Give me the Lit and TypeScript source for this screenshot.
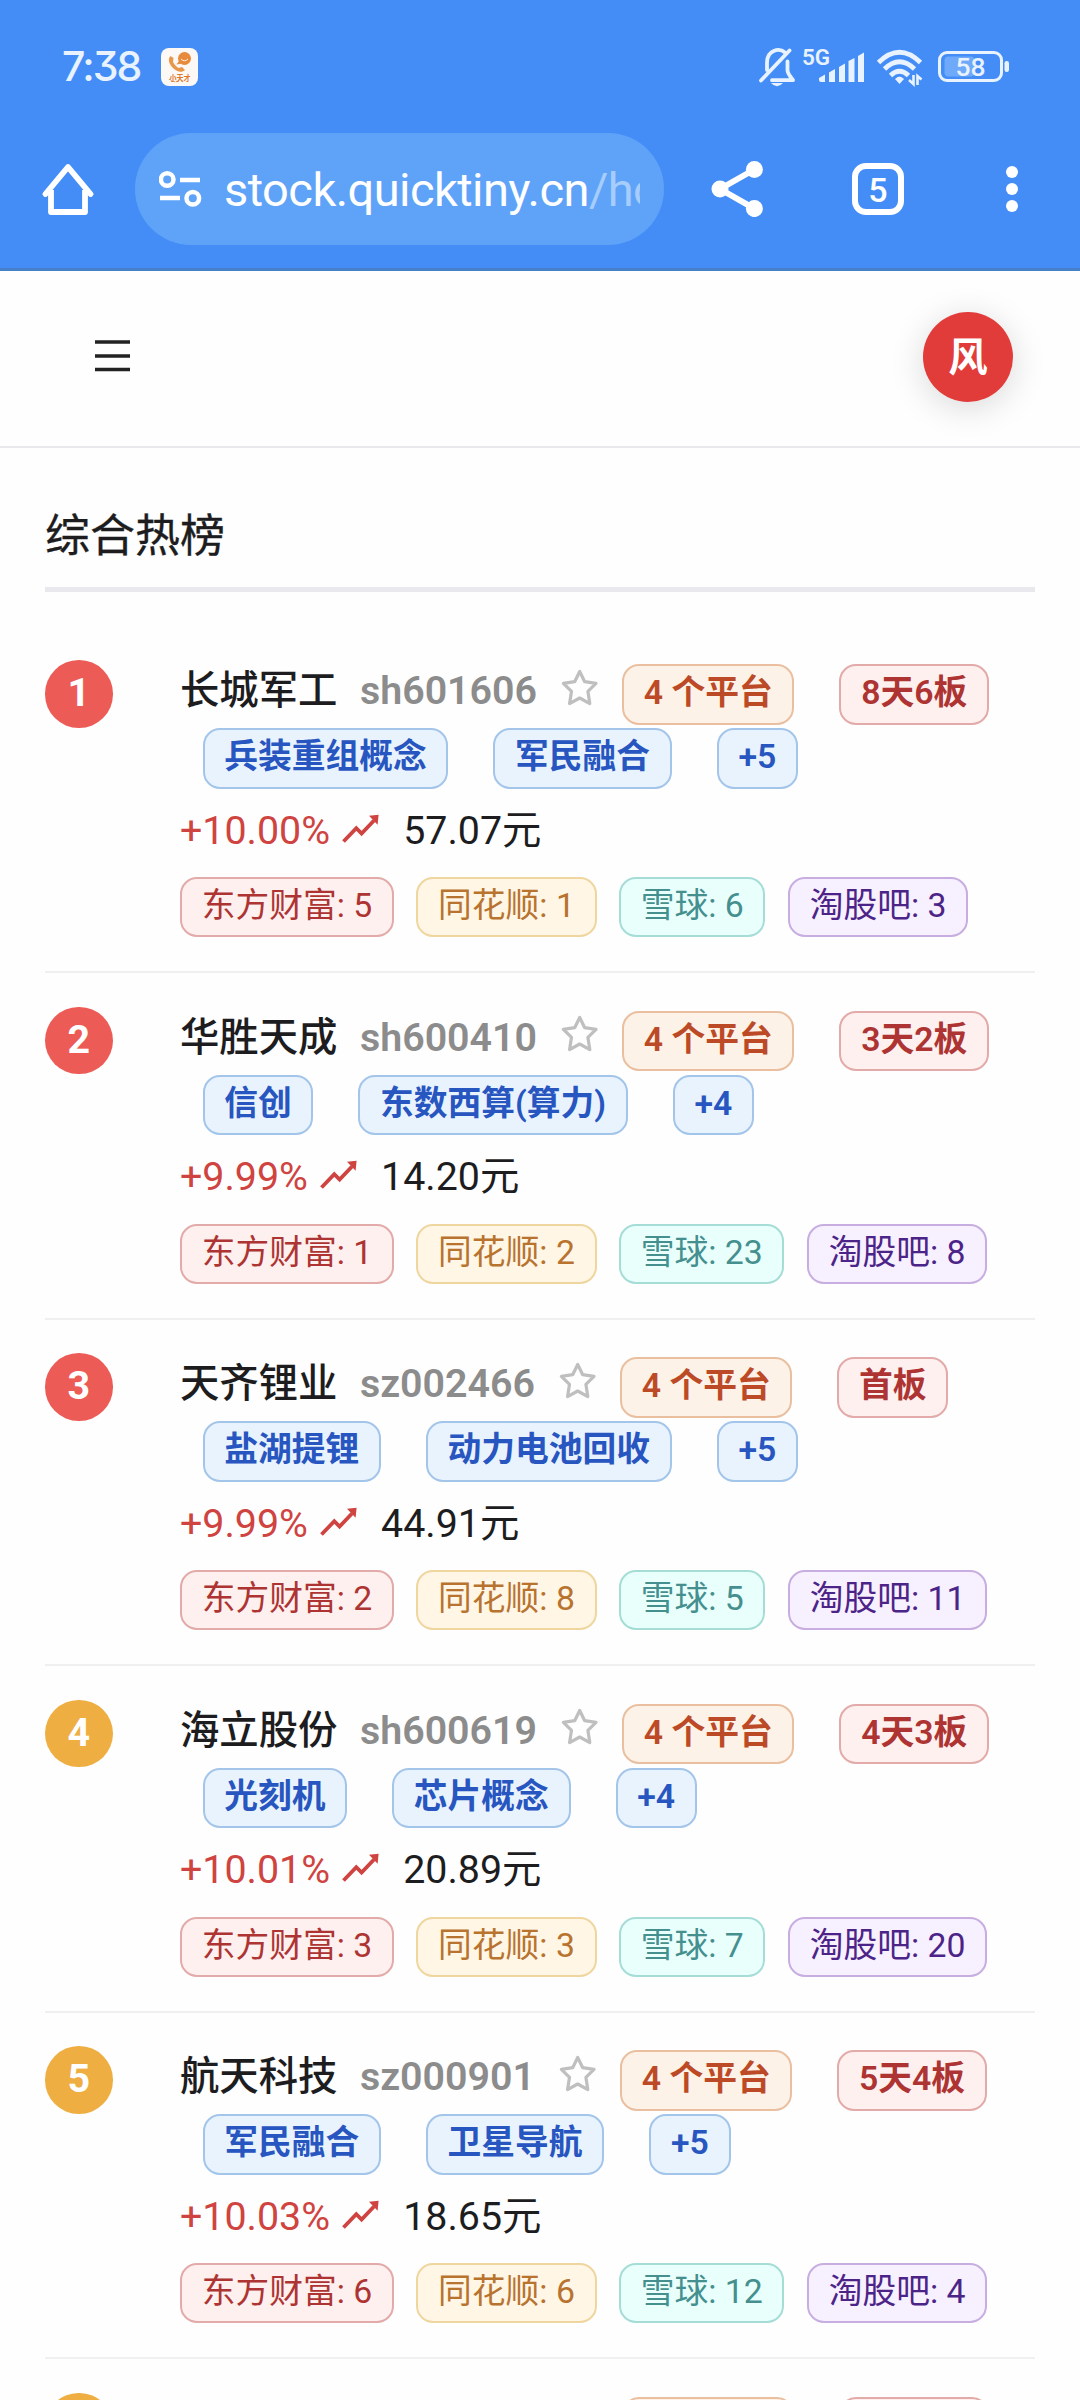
import { LitElement, html, css } from "lit";
import { customElement, property } from "lit/decorators.js";

interface Stock {
  rank: number;
  name: string;
  code: string;
  boards: string;
  concepts: string[];
  change: string;
  price: string;
  ranks: [number, number, number, number];
}

const STOCKS: Stock[] = [
  { rank: 1, name: "长城军工", code: "sh601606", boards: "8天6板", concepts: ["兵装重组概念", "军民融合", "+5"], change: "+10.00%", price: "57.07元", ranks: [5, 1, 6, 3] },
  { rank: 2, name: "华胜天成", code: "sh600410", boards: "3天2板", concepts: ["信创", "东数西算(算力)", "+4"], change: "+9.99%", price: "14.20元", ranks: [1, 2, 23, 8] },
  { rank: 3, name: "天齐锂业", code: "sz002466", boards: "首板", concepts: ["盐湖提锂", "动力电池回收", "+5"], change: "+9.99%", price: "44.91元", ranks: [2, 8, 5, 11] },
  { rank: 4, name: "海立股份", code: "sh600619", boards: "4天3板", concepts: ["光刻机", "芯片概念", "+4"], change: "+10.01%", price: "20.89元", ranks: [3, 3, 7, 20] },
  { rank: 5, name: "航天科技", code: "sz000901", boards: "5天4板", concepts: ["军民融合", "卫星导航", "+5"], change: "+10.03%", price: "18.65元", ranks: [6, 6, 12, 4] },
];

const PLATFORMS: [string, string][] = [
  ["东方财富", "red"],
  ["同花顺", "amber"],
  ["雪球", "teal"],
  ["淘股吧", "purple"],
];

const tagStyles = css`
  .tag {
    box-sizing: border-box;
    height: 60.25px;
    padding: 0 19.7px 3px;
    border: 2px solid;
    border-radius: 17px;
    font-size: 33.75px;
    line-height: 53.25px;
    white-space: nowrap;
    flex: none;
  }
  .strong { font-weight: 600; }
  .orange { color: #bc4a26; background: #fdf2e8; border-color: #e9bfa0; }
  .red { color: #ad3432; background: #fdf0ef; border-color: #e2aaa8; }
  .blue { color: #2856c0; background: #e8f3fe; border-color: #a3c5e9; }
  .amber { color: #b8732f; background: #fff6e6; border-color: #efd69f; }
  .teal { color: #458f8f; background: #e8fffc; border-color: #a5ddd6; }
  .purple { color: #4c2488; background: #f7f0ff; border-color: #c8aee0; }
  .rank {
    width: 67.5px;
    height: 67.5px;
    border-radius: 50%;
    background: #eeae42;
    color: #fff;
    font-size: 39.375px;
    font-weight: 700;
    line-height: 66px;
    text-align: center;
    flex: none;
  }
  .top { background: #ec5b56; }
`;

@customElement("status-bar")
export class StatusBar extends LitElement {
  static styles = css`
    :host {
      display: flex;
      align-items: center;
      box-sizing: border-box;
      height: 133px;
      padding: 0 70px 0 62px;
      color: #e8f3ff;
    }
    .time {
      width: 99px;
      padding-bottom: 1px;
      font: 500 41px/50px Inter, sans-serif;
      font-feature-settings: "cv09";
      letter-spacing: -1.9px;
    }
    .icons { margin-left: auto; }
    svg { display: block; }
    .small { font: 600 22.5px Roboto, sans-serif; }
    .level { font: 500 26.5px Roboto, sans-serif; }
    .brand { font: 700 8px "Noto Sans CJK SC", sans-serif; }
  `;

  render() {
    return html`
      <span class="time">7:38</span>
      <svg width="37" height="38" viewBox="0 0 37 38">
        <rect width="37" height="38" rx="8" fill="#fbf8f5" />
        <path d="M9.500 8C6.500 11 8 16 12 20C16 24 21 25 24 22L21 19L17.500 20C14.500 18 13 16 12 14L12.500 10Z" fill="#e7964a" />
        <circle cx="23.500" cy="10.500" r="6.500" fill="#e78a3c" />
        <path d="M18 13L15.500 16.500L21 15.500Z" fill="#e78a3c" />
        <path d="M20 11Q23.500 14.500 27 11" stroke="#fbf0e4" fill="none" />
        <path d="M8 31Q12 35 18 33" stroke="#e0782c" stroke-dasharray="1.500 1" fill="none" />
        <text class="brand" x="8.500" y="33" textLength="21" lengthAdjust="spacingAndGlyphs" fill="#dd7a2c">小天才</text>
      </svg>
      <svg class="icons" width="254" height="46" viewBox="756 43 254 46">
        <g fill="none" stroke="#e8f3ff" stroke-width="3.800" stroke-linejoin="round" stroke-linecap="round">
          <path d="M761 79.500L789.500 49.500" />
          <path d="M767 69V61.500C767 49 779 46.500 785 51.500" />
          <path d="M772 79.200H793C789.500 74.500 787.500 72.500 787.500 69V60.500" />
        </g>
        <path d="M771 82H783Q777 88.500 771 82Z" fill="#e8f3ff" />
        <text class="small" x="802" y="63.500" fill="#e8f3ff">5G</text>
        <g fill="#e8f3ff">
          <path d="M819 77L825 73.500V81H821Q819 81 819 79Z" />
          <path d="M829 71.500L835 68V81H829Z" />
          <path d="M839 66L845 62.500V81H839Z" />
          <path d="M848.500 60L854.500 57V81H848.500Z" />
          <path d="M858 55L864 51.500V81H858Z" />
        </g>
        <g fill="none" stroke="#e8f3ff" stroke-width="4.800">
          <path d="M878.500 61.500Q899.500 41 920.500 61.500" />
          <path d="M884.500 68Q899.500 53.500 914.500 68" />
          <path d="M890.500 74.500Q899.500 66 908.500 74.500" />
        </g>
        <path d="M895 78Q899.500 73 904 78L899.500 83Z" fill="#e8f3ff" />
        <path d="M913.500 74V83L909 79M917.500 84V75L921.500 78.500" fill="none" stroke="#e8f3ff" stroke-width="2.600" />
        <rect x="939.500" y="51.500" width="62" height="28" rx="7.500" fill="none" stroke="#e8f3ff" stroke-width="3" />
        <rect x="944.500" y="55.500" width="30" height="20" rx="4" fill="#6fa9f9" />
        <rect x="1004.500" y="60" width="4.500" height="11" rx="2.200" fill="#e8f3ff" />
        <text class="level" x="970.500" y="75.300" text-anchor="middle" fill="#e8f3ff">58</text>
      </svg>
    `;
  }
}

@customElement("browser-toolbar")
export class BrowserToolbar extends LitElement {
  static styles = css`
    :host {
      display: flex;
      align-items: center;
      box-sizing: border-box;
      height: 112px;
      padding: 0 62px 0 42px;
      color: #fff;
    }
    svg { display: block; flex: none; }
    .field {
      display: flex;
      align-items: center;
      box-sizing: border-box;
      width: 529px;
      height: 112px;
      margin: 0 47px 0 41px;
      padding: 0 23px 0 24px;
      border-radius: 56px;
      background: #5fa3f8;
    }
    .url {
      width: 416px;
      margin-left: 22px;
      padding-top: 2px;
      overflow: hidden;
      font-size: 47px;
      line-height: 62px;
      letter-spacing: -0.55px;
      white-space: nowrap;
    }
    .path { color: #a6cdfb; }
    .tabs {
      box-sizing: border-box;
      width: 52px;
      height: 52px;
      margin: 0 102px 0 89px;
      border: 6px solid #fff;
      border-radius: 14px;
      font-size: 34px;
      font-weight: 500;
      line-height: 42px;
      text-align: center;
    }
  `;

  render() {
    return html`
      <svg width="52" height="56" viewBox="42 161 52 56" fill="none" stroke="#fff" stroke-width="5.800" stroke-linejoin="round">
        <path d="M45.500 194L68 167L90.500 194" stroke-linecap="round" />
        <path d="M51 190V212H85V190" />
      </svg>
      <div class="field">
        <svg width="43" height="38" viewBox="159 170 43 38" fill="none" stroke="#fff" stroke-width="4.500">
          <circle cx="167.200" cy="179.500" r="6.300" />
          <path d="M180 180H200M160 198H180" />
          <circle cx="192.800" cy="198.200" r="6.300" />
        </svg>
        <div class="url">stock.quicktiny.cn<span class="path">/ho</span></div>
      </div>
      <svg width="52" height="56" viewBox="711 161 52 56" fill="#fff">
        <path d="M754.400 169.500L720 189L754.400 208.700" fill="none" stroke="#fff" stroke-width="6" />
        <circle cx="720" cy="189" r="8.500" />
        <circle cx="754.400" cy="169.500" r="8.500" />
        <circle cx="754.400" cy="208.600" r="8.500" />
      </svg>
      <div class="tabs">5</div>
      <svg width="12" height="48" viewBox="0 0 12 48" fill="#fff">
        <circle cx="6" cy="7" r="6" />
        <circle cx="6" cy="24" r="6" />
        <circle cx="6" cy="41" r="6" />
      </svg>
    `;
  }
}

@customElement("stock-row")
export class StockRow extends LitElement {
  @property({ attribute: false }) stock!: Stock;

  static styles = [
    tagStyles,
    css`
      :host {
        display: flex;
        box-sizing: border-box;
        height: 346.5px;
        padding-top: 33.75px;
        gap: 67.5px;
        border-bottom: 2px solid #f0f0f0;
      }
      .body { flex: 1; min-width: 0; }
      .line { display: flex; }
      .head {
        box-sizing: border-box;
        height: 68px;
        padding-top: 2px;
        align-items: baseline;
        font-size: 39.375px;
        font-weight: 500;
        line-height: 58px;
        color: #1d1d1f;
        white-space: nowrap;
      }
      .code { margin-left: 22.5px; font-weight: 600; color: #8c8c8c; }
      .star { align-self: flex-start; margin: 5.5px 22.5px 0 23.2px; flex: none; }
      .gap { gap: 45px; }
      .concepts { padding-left: 22.5px; }
      .quote {
        align-items: flex-start;
        margin-top: 10px;
        font-size: 39.375px;
        line-height: 64px;
        color: #1d1d1f;
      }
      .change { color: #cf4340; }
      .trend { margin: 11px 22.5px 0 11.25px; }
      .sources { margin-top: 14.5px; gap: 22.5px; }
      .boards { margin-left: 45px; }
    `,
  ];

  render() {
    const s = this.stock;
    return html`
      <div class="rank ${s.rank <= 3 ? "top" : ""}">${s.rank}</div>
      <div class="body">
        <div class="line head">
          <span>${s.name}</span>
          <span class="code">${s.code}</span>
          <svg class="star" width="39.4" height="39.4" viewBox="0 0 39.4 39.4">
            <path d="M19.700 3.500L24.700 13.700L36 15.400L27.900 23.300L29.800 35.600L19.700 30L9.600 35.600L11.500 23.300L3.400 15.400L14.700 13.700Z" fill="none" stroke="#bfbfbf" stroke-width="3.200" stroke-linejoin="round" />
          </svg>
          <span class="tag strong orange">4 个平台</span>
          <span class="tag strong red boards">${s.boards}</span>
        </div>
        <div class="line gap concepts">
          ${s.concepts.map((c) => html`<span class="tag strong blue">${c}</span>`)}
        </div>
        <div class="line quote">
          <span class="change">${s.change}</span>
          <svg class="trend" width="39.4" height="39.4" viewBox="0 0 39.4 39.4">
            <path d="M2.500 31.500L15.300 18.200L20.600 23.500L33 10.500" fill="none" stroke="#cf4340" stroke-width="3.800" />
            <path d="M28 5.800L37.600 4.800L36.600 14.800Z" fill="#cf4340" />
          </svg>
          <span>${s.price}</span>
        </div>
        <div class="line sources">
          ${PLATFORMS.map(([label, tone], i) => html`<span class="tag ${tone}">${label}: ${s.ranks[i]}</span>`)}
        </div>
      </div>
    `;
  }
}

@customElement("app-root")
export class AppRoot extends LitElement {
  static styles = [
    tagStyles,
    css`
      :host {
        display: block;
        width: 1080px;
        height: 2400px;
        overflow: hidden;
        background: #fefefe;
        font-family: Roboto, "Noto Sans CJK SC", sans-serif;
      }
      .chrome {
        box-sizing: border-box;
        height: 271px;
        border-bottom: 3px solid #467fca;
        background: #448df7;
      }
      .nav {
        display: flex;
        align-items: center;
        justify-content: space-between;
        box-sizing: border-box;
        height: 177px;
        padding: 0 67px 4px 95px;
        border-bottom: 2px solid #e8e8ed;
      }
      .menu { margin-bottom: 2px; }
      .avatar {
        width: 90px;
        height: 90px;
        border-radius: 50%;
        background: #e13c3a;
        box-shadow: 0 6px 34px rgba(0, 0, 0, 0.15);
        color: #fff;
        font-size: 39.375px;
        font-weight: 600;
        line-height: 91px;
        text-align: center;
      }
      .page { padding: 56px 45px 0; }
      .title {
        height: 83px;
        margin: 0 0 34.5px;
        border-bottom: 5px solid #e8e8ed;
        color: #1d1d1f;
        font-size: 45px;
        font-weight: 400;
        line-height: 65px;
        -webkit-text-stroke: 0.3px #1d1d1f;
      }
      .peek { display: flex; padding-top: 33.75px; }
      .first { width: 172px; margin: 4px 45px 0 509.5px; }
      .second { width: 150px; margin-top: 4px; }
    `,
  ];

  render() {
    return html`
      <div class="chrome">
        <status-bar></status-bar>
        <browser-toolbar></browser-toolbar>
      </div>
      <header class="nav">
        <svg class="menu" width="35" height="32" viewBox="0 0 35 32">
          <path d="M0 2H35M0 16H35M0 29.500H35" stroke="#222" stroke-width="3.400" />
        </svg>
        <div class="avatar">风</div>
      </header>
      <main class="page">
        <h1 class="title">综合热榜</h1>
        ${STOCKS.map((s) => html`<stock-row .stock=${s}></stock-row>`)}
        <div class="peek">
          <div class="rank"></div>
          <div class="tag orange first"></div>
          <div class="tag red second"></div>
        </div>
      </main>
    `;
  }
}
